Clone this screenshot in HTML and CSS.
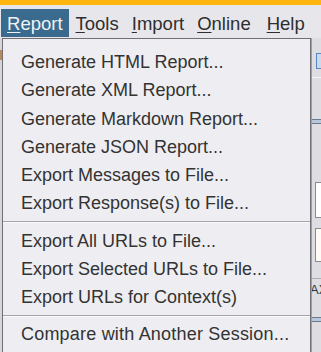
FILE: index.html
```html
<!DOCTYPE html>
<html>
<head>
<meta charset="utf-8">
<link rel="stylesheet" href="styles.css">
</head>
<body>
<div class="topbar"></div>
<div class="menubar">
  <div class="mitem active"><span class="u">R</span>eport</div>
  <div class="mitem"><span class="u">T</span>ools</div>
  <div class="mitem"><span class="u">I</span>mport</div>
  <div class="mitem"><span class="u">O</span>nline</div>
  <div class="mitem help"><span class="u">H</span>elp</div>
</div>
<div class="app">
  <div class="lstrip">
    <div class="lmark"></div>
  </div>
  <div class="center"></div>
  <div class="rstrip">
    <div class="r-gap1"></div>
    <div class="r-icon"></div>
    <div class="r-gap2"></div>
    <div class="r-line"></div>
    <div class="r-gap3"></div>
    <div class="r-dbl"></div>
    <div class="r-gap4"></div>
    <div class="r-box"></div>
    <div class="r-gap5"></div>
    <div class="r-box r-box2"></div>
    <div class="r-gap6"></div>
    <div class="r-tab">AX</div>
    <div class="r-dbl r-dbl2"></div>
  </div>
  <div class="popup">
    <div class="pitem">Generate HTML Report...</div>
    <div class="pitem">Generate XML Report...</div>
    <div class="pitem">Generate Markdown Report...</div>
    <div class="pitem">Generate JSON Report...</div>
    <div class="pitem">Export Messages to File...</div>
    <div class="pitem">Export Response(s) to File...</div>
    <div class="sep"></div>
    <div class="pitem">Export All URLs to File...</div>
    <div class="pitem">Export Selected URLs to File...</div>
    <div class="pitem">Export URLs for Context(s)</div>
    <div class="sep"></div>
    <div class="pitem wide">Compare with Another Session...</div>
  </div>
</div>
</body>
</html>
```
FILE: styles.css
```css
html, body {
  margin: 0;
  padding: 0;
}
body {
  width: 321px;
  height: 352px;
  overflow: hidden;
  background: #dcdce0;
  font-family: "Liberation Sans", Arial, sans-serif;
  font-size: 18px;
}
.topbar {
  height: 5px;
  background: #fdb60d;
}
.menubar {
  height: 33px;
  box-sizing: border-box;
  padding: 4px 0 0 1px;
  background: #e7e7eb;
  display: flex;
  align-items: flex-start;
}
.mitem {
  height: 28px;
  line-height: 29px;
  padding: 0 6.5px;
  font-size: 18.5px;
  color: #2e2e2e;
  white-space: nowrap;
}
.mitem.active {
  padding: 0 6.5px 0 6px;
  background: #3a6a8d;
  color: #eef2f6;
}
.mitem.help {
  margin-left: 3px;
}
.u {
  text-decoration: underline;
  text-underline-offset: 2px;
  text-decoration-thickness: 1px;
}
.app {
  position: relative;
  display: flex;
  height: 314px;
}
.lstrip {
  width: 2px;
  background: #d6d6da;
}
.lmark {
  margin-top: 12px;
  height: 10px;
  background: #b88a5a;
}
.center {
  flex: 1;
  background: #e2e2e6;
}
.rstrip {
  width: 9px;
  background: #dedee2;
  display: flex;
  flex-direction: column;
}
.r-gap1 { height: 15px; }
.r-icon {
  height: 14px;
  margin-left: 4px;
  border: 1px solid #5b86c4;
  border-right: none;
  background: #c9daf0;
}
.r-gap2 { height: 8px; }
.r-line { height: 1px; background: #f4f4f6; }
.r-gap3 { height: 41px; }
.r-dbl {
  height: 3px;
  border-top: 1px solid #6c7c8c;
  border-bottom: 1px solid #6c7c8c;
  background: #b8c8dc;
}
.r-gap4 { height: 58px; }
.r-box {
  height: 34px;
  margin-left: 3px;
  border: 1px solid #8a8a8e;
  border-right: none;
  background: #ffffff;
}
.r-gap5 { height: 10px; }
.r-box2 {
  height: 32px;
  background: #fffaf5;
}
.r-gap6 { height: 16px; }
.r-tab {
  height: 22px;
  border-top: 1px solid #b0b0b4;
  font-size: 13px;
  line-height: 22px;
  color: #333;
  margin-left: -2px;
  overflow: hidden;
  white-space: nowrap;
}
.r-dbl2 { margin-top: 16px; }
.popup {
  position: absolute;
  left: 2px;
  top: 0;
  width: 307px;
  height: 340px;
  background: #eeeef2;
  border: 1px solid #707074;
  padding-top: 9px;
  box-shadow: 1px 0 0 #a0a0a4;
}
.pitem {
  height: 28.25px;
  line-height: 28px;
  padding-left: 18px;
  color: #333333;
  white-space: nowrap;
}
.pitem.wide {
  letter-spacing: 0.2px;
}
.sep {
  height: 9px;
  display: flex;
  flex-direction: column;
  justify-content: center;
}
.sep::before {
  content: "";
  display: block;
  height: 1px;
  background: #a6a6aa;
}
.sep::after {
  content: "";
  display: block;
  height: 1px;
  background: #fafafc;
}
```
